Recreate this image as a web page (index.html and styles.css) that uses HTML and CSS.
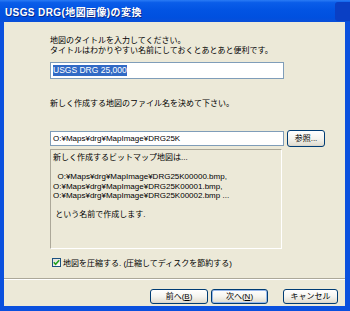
FILE: index.html
```html
<!DOCTYPE html>
<html>
<head>
    <title>USGS DRG(地図画像)の変換</title>
    <link rel="stylesheet" href="styles.css">
</head>
<body>
    <div class="window">
        <div class="titlebar">
            <span class="title">USGS DRG(地図画像)の変換</span>
            <span class="close-stub"></span>
        </div>
        <div class="client">
            <div class="content">
                <p class="prompt">地図のタイトルを入力してください。<br>タイトルはわかりやすい名前にしておくとあとあと便利です。</p>
                <div class="textbox title-box"><span class="selected">USGS DRG 25,000</span></div>

                <p class="prompt file-prompt">新しく作成する地図のファイル名を決めて下さい。</p>
                <div class="file-row">
                    <div class="textbox file-box">O:¥Maps¥drg¥MapImage¥DRG25K</div>
                    <button class="btn browse">参照...</button>
                </div>
                <div class="info-box">新しく作成するビットマップ地図は...

  O:¥Maps¥drg¥MapImage¥DRG25K00000.bmp,
O:¥Maps¥drg¥MapImage¥DRG25K00001.bmp,
O:¥Maps¥drg¥MapImage¥DRG25K00002.bmp ...

 という名前で作成します.</div>
                <label class="check-row">
                    <span class="checkbox">
                        <svg width="9" height="9" viewBox="0 0 9 9">
                            <path d="M1.8 4.2 L3.6 6.2 L7.2 2.2" fill="none" stroke="#21a121" stroke-width="1.6"/>
                        </svg>
                    </span>
                    <span>地図を圧縮する. (圧縮してディスクを節約する)</span>
                </label>
            </div>
            <div class="separator"></div>
            <div class="buttons">
                <button class="btn nav">前へ(<u>B</u>)</button>
                <button class="btn nav default">次へ(<u>N</u>)</button>
                <button class="btn cancel">キャンセル</button>
            </div>
        </div>
    </div>
</body>
</html>
```

FILE: styles.css
```css
body {
    margin: 0;
    background: #ffffff;
    font-family: "Liberation Sans", "Noto Sans CJK JP", sans-serif;
}
.window {
    width: 350px;
    height: 311px;
    display: flex;
    flex-direction: column;
    background: #0a50de;
}
.titlebar {
    height: 22px;
    display: flex;
    align-items: center;
    padding-left: 5px;
    background: linear-gradient(#2a7bf5 0%, #0a5de9 12%, #0254e3 45%, #0050df 80%, #0a4fd8 100%);
}
.title {
    color: #ffffff;
    font-weight: bold;
    font-size: 10px;
    letter-spacing: 0.4px;
    text-shadow: 1px 1px 0 #0a2a8a;
    flex: 1;
}
.close-stub {
    width: 15px;
    height: 19px;
    background: #0a3fc4;
    border-radius: 3px 0 0 3px;
}
.client {
    flex: 1;
    margin: 0 5px 5px 4px;
    background: #ece9d8;
    display: flex;
    flex-direction: column;
    font-size: 8px;
    color: #000000;
}
.content {
    flex: 1;
    padding: 14px 0 0 46px;
}
.prompt {
    margin: 0;
    line-height: 10px;
}
.textbox {
    box-sizing: border-box;
    width: 234px;
    border: 1px solid #7f9db9;
    background: #ffffff;
    display: flex;
    align-items: center;
    padding: 0 2px;
    white-space: nowrap;
}
.title-box {
    margin-top: 6px;
    height: 17px;
    font-size: 8.5px;
}
.selected {
    background: #316ac5;
    color: #ffffff;
    line-height: 11px;
}
.file-prompt {
    margin-top: 20px;
}
.file-row {
    margin-top: 21px;
    display: flex;
    align-items: center;
    gap: 3px;
    height: 17px;
}
.file-box {
    height: 15px;
}
.btn {
    box-sizing: border-box;
    border: 1px solid #003c74;
    border-radius: 3px;
    background: linear-gradient(#ffffff 0%, #f5f4ef 50%, #e3e0d4 90%, #d6d0c5 100%);
    font-family: "Liberation Sans", "Noto Sans CJK JP", sans-serif;
    font-size: 8px;
    color: #000000;
    padding: 0;
    line-height: 1;
}
.browse {
    width: 38px;
    height: 17px;
}
.info-box {
    box-sizing: border-box;
    margin-top: 2px;
    width: 232px;
    height: 100px;
    border-top: 1px solid #aca899;
    border-left: 1px solid #aca899;
    border-right: 1px solid #ffffff;
    border-bottom: 1px solid #ffffff;
    padding: 3px 0 0 2px;
    line-height: 9.5px;
    white-space: pre;
}
.check-row {
    margin-top: 8px;
    display: flex;
    align-items: center;
    gap: 2px;
    height: 10px;
    padding-left: 2px;
}
.checkbox {
    box-sizing: border-box;
    width: 9px;
    height: 9px;
    border: 1px solid #1c5180;
    background: linear-gradient(135deg, #dcdcd7, #ffffff);
    display: flex;
}
.checkbox svg {
    margin: -1px;
}
.separator {
    height: 1px;
    background: #aca899;
    border-bottom: 1px solid #ffffff;
}
.buttons {
    display: flex;
    justify-content: flex-end;
    padding: 9px 7px 2px 0;
    gap: 3px;
}
.nav {
    width: 58px;
    height: 15px;
}
.default {
    width: 57px;
    box-shadow: inset 0 0 0 1px #98b8ea;
}
.cancel {
    width: 55px;
    height: 15px;
    margin-left: 12px;
}
```
